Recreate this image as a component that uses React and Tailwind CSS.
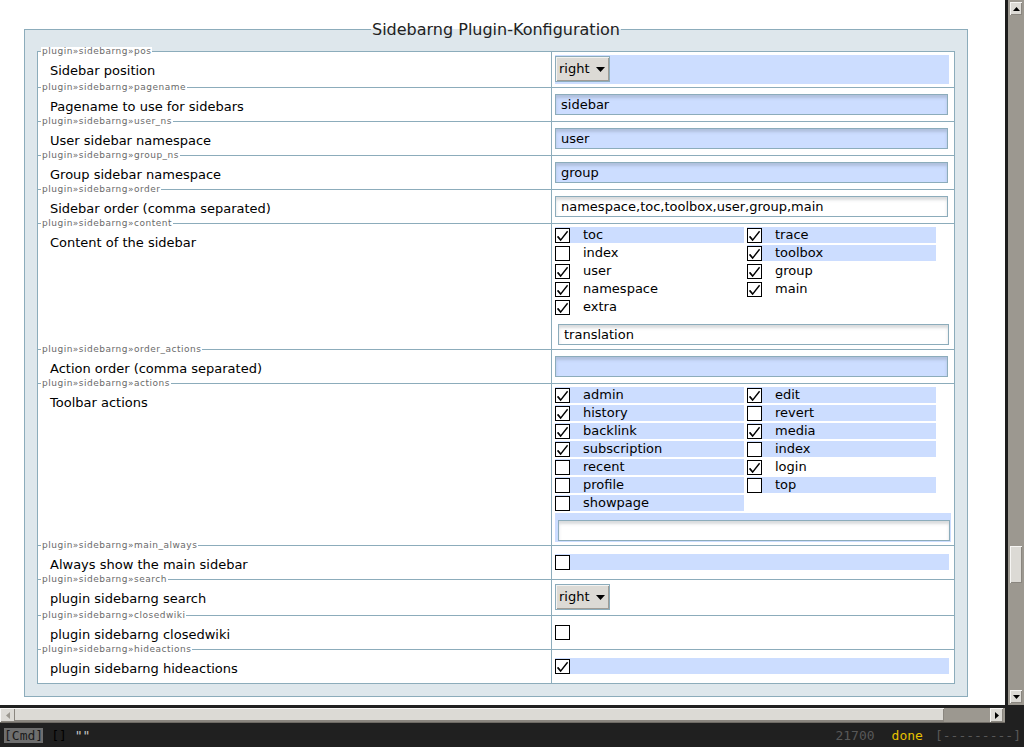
import React from 'react';

const rows = [
    { key: 'pos', label: 'Sidebar position', type: 'select', blue: true },
    { key: 'pagename', label: 'Pagename to use for sidebars', type: 'text', value: 'sidebar', blue: true },
    { key: 'user_ns', label: 'User sidebar namespace', type: 'text', value: 'user', blue: true },
    { key: 'group_ns', label: 'Group sidebar namespace', type: 'text', value: 'group', blue: true },
    { key: 'order', label: 'Sidebar order (comma separated)', type: 'text', value: 'namespace,toc,toolbox,user,group,main', blue: false },
    {
        key: 'content',
        label: 'Content of the sidebar',
        type: 'multi',
        left: [['toc', true, true], ['index', false, false], ['user', true, false], ['namespace', true, false], ['extra', true, false]],
        right: [['trace', true, true], ['toolbox', true, true], ['group', true, false], ['main', true, false]],
        extra: 'translation',
        extraBlue: false,
    },
    { key: 'order_actions', label: 'Action order (comma separated)', type: 'text', value: '', blue: true },
    {
        key: 'actions',
        label: 'Toolbar actions',
        type: 'multi',
        left: [['admin', true, true], ['history', true, true], ['backlink', true, true], ['subscription', true, true], ['recent', false, true], ['profile', false, true], ['showpage', false, true]],
        right: [['edit', true, true], ['revert', false, true], ['media', true, true], ['index', false, true], ['login', true, false], ['top', false, true]],
        extra: '',
        extraBlue: true,
    },
    { key: 'main_always', label: 'Always show the main sidebar', type: 'check', checked: false, blue: true },
    { key: 'search', label: 'plugin sidebarng search', type: 'select', blue: false },
    { key: 'closedwiki', label: 'plugin sidebarng closedwiki', type: 'check', checked: false, blue: false },
    { key: 'hideactions', label: 'plugin sidebarng hideactions', type: 'check', checked: true, blue: true },
];

function Box({ checked }) {
    return (
        <span className="w-[15px] h-[15px] shrink-0 border border-black bg-white flex items-center justify-center">
            {checked && (
                <svg width="13" height="13" viewBox="0 0 13 13">
                    <path d="M1.5 7.5 L4.6 11.2 L11.6 2.2" fill="none" stroke="#000" strokeWidth="1.4" />
                    <path d="M2 7.2 L4.6 10.4" fill="none" stroke="#000" strokeWidth="1" />
                </svg>
            )}
        </span>
    );
}

function Select() {
    return (
        <div className="w-[55px] h-[26px] flex items-center pl-[3px] border border-[#8cacbb] bg-[#dcdad5] shadow-[inset_1px_1px_0_#f4f3f1,inset_-1px_-1px_0_#a09c95] text-[13px] text-black">
            <span>right</span>
            <svg className="ml-[6px]" width="9" height="5" viewBox="0 0 9 5">
                <path d="M0 0 H9 L4.5 5 Z" fill="#000" />
            </svg>
        </div>
    );
}

function TextInput({ value, blue, className = '' }) {
    return (
        <input
            readOnly
            value={value}
            className={`block h-[21px] px-[5px] border border-[#8cacbb] text-[13px] leading-[19px] text-black outline-none shadow-[inset_0_3px_3px_rgba(80,90,100,0.22)] ${blue ? 'bg-[#cdf]' : 'bg-white'} ${className}`}
        />
    );
}

function CheckCol({ items }) {
    return (
        <div className="w-[189px] flex flex-col gap-[2px]">
            {items.map(([name, checked, blue]) => (
                <div key={name} className={`h-4 flex items-center ${blue ? 'bg-[#cdf]' : ''}`}>
                    <Box checked={checked} />
                    <span className="ml-[13px] text-[13px] leading-4 text-black">{name}</span>
                </div>
            ))}
        </div>
    );
}

function Value({ row }) {
    if (row.type === 'select') {
        return row.blue ? (
            <div className="pt-[3px] pb-[3px]">
                <div className="w-[394px] bg-[#cdf] pt-px pb-[2px]">
                    <Select />
                </div>
            </div>
        ) : (
            <div className="pt-[4px] pb-[5px]">
                <Select />
            </div>
        );
    }
    if (row.type === 'text') {
        return (
            <div className="py-[6px]">
                <TextInput value={row.value} blue={row.blue} className="w-[393px]" />
            </div>
        );
    }
    if (row.type === 'check') {
        return (
            <div className="pt-[8px] pb-[9px]">
                <div className={`w-[394px] h-4 flex items-center ${row.blue ? 'bg-[#cdf]' : ''}`}>
                    <Box checked={row.checked} />
                </div>
            </div>
        );
    }
    return (
        <div className="pt-[3px]">
            <div className="flex gap-[3px]">
                <CheckCol items={row.left} />
                <CheckCol items={row.right} />
            </div>
            {row.extraBlue ? (
                <div className="mt-[2px] mb-[3px] w-[396px] bg-[#cdf] pl-[3px] pt-[7px] pb-px">
                    <TextInput value={row.extra} blue={false} className="w-[392px]" />
                </div>
            ) : (
                <div className="mt-[9px] mb-[4px] pl-[3px]">
                    <TextInput value={row.extra} blue={false} className="w-[391px]" />
                </div>
            )}
        </div>
    );
}

function Row({ row }) {
    return (
        <div className="relative flex border-t border-[#8cacbb]">
            <span className="absolute left-[3px] top-[-5px] bg-white px-px text-[9px] leading-[9px] tracking-[0.5px] text-[#6a6a6a]">
                plugin»sidebarng»{row.key}
            </span>
            <div className="w-[514px] shrink-0 border-r border-[#8cacbb] pl-3 pt-[11px] text-[13px] leading-[15px] text-black">
                {row.label}
            </div>
            <div className="flex-1 pl-[3px]">
                <Value row={row} />
            </div>
        </div>
    );
}

function ScrollBtn({ dir, className = '' }) {
    const d = {
        up: 'M0 4 L3.5 0 L7 4 Z',
        down: 'M0 0 H7 L3.5 4 Z',
        left: 'M4 0 V7 L0 3.5 Z',
        right: 'M0 0 V7 L4 3.5 Z',
    }[dir];
    const vert = dir === 'up' || dir === 'down';
    return (
        <div className={`flex items-center justify-center bg-[#dcdad5] shadow-[inset_1px_1px_0_#f6f5f3,inset_-1px_-1px_0_#8a867f] ${className}`}>
            <svg width={vert ? 7 : 4} height={vert ? 4 : 7} viewBox={vert ? '0 0 7 4' : '0 0 4 7'}>
                <path d={d} fill={dir === 'left' ? '#9c9890' : '#000'} />
            </svg>
        </div>
    );
}

export default function App() {
    return (
        <div className="w-[1024px] h-[747px] overflow-hidden bg-[#202020] flex flex-col font-['DejaVu_Sans',sans-serif]">
            <div className="flex h-[705px]">
                <main className="w-[1005px] h-full overflow-hidden bg-white pt-[20px] pl-[24px]">
                    <fieldset className="w-[944px] border border-[#8cacbb] bg-[#dee7ec] px-3 pt-3 pb-3">
                        <legend className="mx-auto px-px text-[16px] leading-[19px] text-[#222]">
                            Sidebarng Plugin-Konfiguration
                        </legend>
                        <div className="border-x border-b border-[#8cacbb] bg-white">
                            {rows.map((r) => (
                                <Row key={r.key} row={r} />
                            ))}
                        </div>
                    </fieldset>
                </main>
                <div className="w-[3px] bg-[#1c1c1c]" />
                <div className="w-[16px] bg-[#9c9890] flex flex-col items-center py-[2px]">
                    <ScrollBtn dir="up" className="w-[12px] h-[13px]" />
                    <div className="mt-[531px] w-[12px] h-[37px] bg-[#dcdad5] shadow-[inset_1px_1px_0_#f6f5f3,inset_-1px_-1px_0_#8a867f]" />
                    <div className="flex-1" />
                    <ScrollBtn dir="down" className="w-[12px] h-[13px]" />
                </div>
            </div>
            <div className="h-[3px]" />
            <div className="flex h-[15px]">
                <div className="w-[1005px] flex bg-[#9c9890] pr-[2px] border-b border-[#6f6b65]">
                    <ScrollBtn dir="left" className="w-[15px]" />
                    <div className="w-[929px] bg-[#dcdad5] shadow-[inset_0_1px_0_#f6f5f3,inset_-1px_-2px_0_#8a867f]" />
                    <div className="flex-1" />
                    <ScrollBtn dir="right" className="w-[13px]" />
                </div>
            </div>
            <div className="h-[24px] flex items-center font-['DejaVu_Sans_Mono',monospace] text-[13px] leading-[15px]">
                <span className="ml-[4px] h-[15px] bg-[#6e6e6e] text-[#1a1a1a]">[Cmd]</span>
                <span className="ml-[8px] text-black">[]</span>
                <span className="ml-[8px] text-[#c8c8c8]">""</span>
                <span className="ml-auto text-[#585858]">21700</span>
                <span className="ml-[17px] text-[#e6c100]">done</span>
                <span className="ml-[12px] mr-[3px] text-[#585858]">[---------]</span>
            </div>
        </div>
    );
}
